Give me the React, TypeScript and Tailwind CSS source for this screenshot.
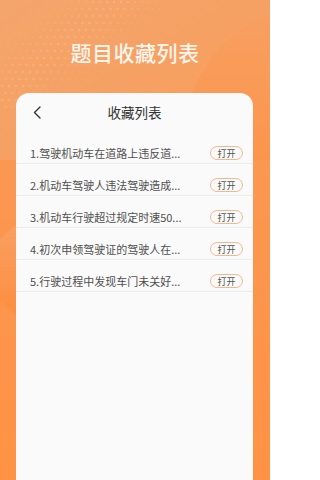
import React from "react";

const items = [
  "1.驾驶机动车在道路上违反道...",
  "2.机动车驾驶人违法驾驶造成...",
  "3.机动车行驶超过规定时速50...",
  "4.初次申领驾驶证的驾驶人在...",
  "5.行驶过程中发现车门未关好...",
];

function Dots() {
  const dots: React.ReactElement[] = [];
  for (let y = 2; y < 110; y += 7) {
    for (let x = 2; x < 160; x += 7) {
      const ox = (Math.floor(y / 7) % 2) * 3.5;
      const px = x + ox;
      const d = px * 0.8 + y;
      if (d < 40 || d > 150) continue;
      const t = 1 - Math.abs(d - 95) / 55;
      dots.push(
        <circle key={`${px}-${y}`} cx={px} cy={y} r={1.3} fill="#ffffff" opacity={0.14 * t} />
      );
    }
  }
  return (
    <svg className="absolute left-0 top-0" width="170" height="120">
      {dots}
    </svg>
  );
}

export default function App() {
  return (
    <div
      className="relative w-[270px] h-[480px] overflow-hidden bg-linear-to-b from-[#f89a58] to-[#ff9244]"
      style={{ fontFamily: '"Noto Sans CJK SC", "Noto Sans", sans-serif' }}
    >
      <div className="absolute left-0 top-0 w-[270px] h-[160px] overflow-hidden bg-linear-to-br from-[#f4a56c] to-[#f89c5a]">
        <div className="absolute left-[184px] top-[4px] w-[272px] h-[272px] rounded-full bg-linear-to-b from-[#f7a062] to-[#ff8c38]" />
        <Dots />
      </div>
      <div className="absolute left-[-10px] top-[220px] w-[100px] h-[100px] rounded-full bg-linear-to-b from-[#f9a062] to-[#fd8d3c]" />
      <div className="relative flex flex-col">
        <div className="pt-[38px] h-[66px] text-center text-[21px] leading-[28px] font-medium text-[#fff5ec] tracking-[0.5px]">
          题目收藏列表
        </div>
        <div className="ml-[16px] mt-[27px] w-[237px] h-[400px] rounded-t-[13px] bg-[#fafafa]">
          <div className="relative h-[39px] flex items-center justify-center">
            <svg
              className="absolute left-[17px] top-[13px]"
              width="9"
              height="13"
              viewBox="0 0 9 13"
              fill="none"
            >
              <polyline points="7,1 1.5,6.5 7,12" stroke="#333" strokeWidth="1.4" strokeLinecap="round" strokeLinejoin="round" />
            </svg>
            <span className="text-[13.5px] text-[#333]">收藏列表</span>
          </div>
          {items.map((t) => (
            <div key={t} className="h-[32px] border-b border-[#ececec]">
              <div className="pt-[10px] h-[31px] flex items-start justify-between pl-[14px] pr-[10px]">
                <span className="h-[22px] leading-[22px] text-[11px] text-[#4f4f4f] whitespace-nowrap">{t}</span>
                <span className="mt-[4px] w-[33px] h-[14px] rounded-full border border-[#f3b88a] flex items-center justify-center text-[9px] leading-none text-[#555]">
                  打开
                </span>
              </div>
            </div>
          ))}
        </div>
      </div>
    </div>
  );
}
